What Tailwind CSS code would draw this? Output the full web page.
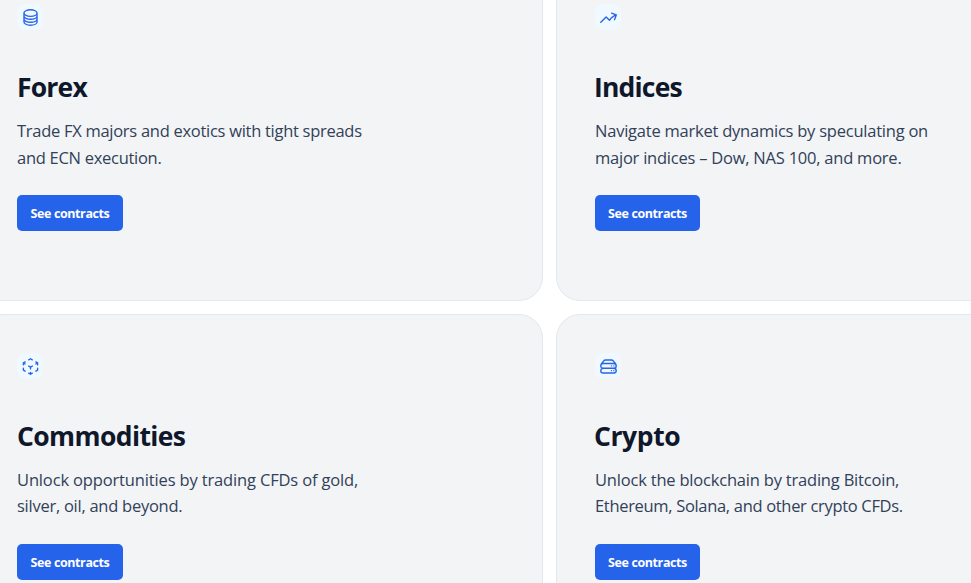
<!DOCTYPE html>
<html lang="en">
<head>
  <meta charset="UTF-8">
  <meta name="viewport" content="width=device-width, initial-scale=1.0">
  <title>Markets</title>
  <script src="https://cdn.jsdelivr.net/npm/@tailwindcss/browser@4"></script>
</head>
<body class="h-screen overflow-hidden bg-white font-['Segoe_UI','Open_Sans',sans-serif] text-slate-900">
  <!-- Markets grid -->
  <main class="-mt-[35px] -ml-[22px] grid w-[1143px] grid-cols-2 gap-[13px]">

    <section class="h-[336px] rounded-3xl border border-slate-200 bg-gray-100 p-[38px]">
      <div class="flex size-[26px] items-center justify-center rounded-lg bg-sky-50 text-[#2563eb]">
        <svg class="size-[19px]" viewBox="0 0 24 24" fill="none" stroke="currentColor" stroke-width="1.7" stroke-linecap="round" stroke-linejoin="round">
          <path d="M20.25 6.375c0 2.278-3.694 4.125-8.25 4.125S3.75 8.653 3.75 6.375m16.5 0c0-2.278-3.694-4.125-8.25-4.125S3.75 4.097 3.75 6.375m16.5 0v11.25c0 2.278-3.694 4.125-8.25 4.125s-8.25-1.847-8.25-4.125V6.375m16.5 0v3.75m-16.5-3.75v3.75m16.5 0v3.75C20.25 16.153 16.556 18 12 18s-8.25-1.847-8.25-4.125v-3.75m16.5 0c0 2.278-3.694 4.125-8.25 4.125s-8.25-1.847-8.25-4.125"/>
        </svg>
      </div>
      <h2 class="mt-[39px] text-[26.5px] leading-9 font-bold tracking-[-0.8px]">Forex</h2>
      <p class="mt-[13px] text-[16.5px] leading-[26.5px] tracking-[-0.28px] whitespace-nowrap text-slate-700">Trade FX majors and exotics with tight spreads<br>and ECN execution.</p>
      <a href="#" class="mt-6 flex h-9 w-[106px] items-center justify-center rounded-[5px] bg-[#2563eb] pt-0.5 text-[12.5px] font-bold tracking-[-0.4px] text-white hover:bg-blue-700">See contracts</a>
    </section>

    <section class="h-[336px] rounded-3xl border border-slate-200 bg-gray-100 p-[38px]">
      <div class="flex size-[26px] items-center justify-center rounded-lg bg-sky-50 text-[#2563eb]">
        <svg class="size-[19px]" viewBox="0 0 24 24" fill="none" stroke="currentColor" stroke-width="1.7" stroke-linecap="round" stroke-linejoin="round">
          <path d="M2.25 18 9 11.25l4.306 4.306a11.95 11.95 0 0 1 5.814-5.518l2.74-1.22m0 0-5.94-2.281m5.94 2.28-2.28 5.941"/>
        </svg>
      </div>
      <h2 class="mt-[39px] -ml-px text-[26.5px] leading-9 font-bold tracking-[-0.8px]">Indices</h2>
      <p class="mt-[13px] text-[16.5px] leading-[26.5px] tracking-[-0.23px] whitespace-nowrap text-slate-700">Navigate market dynamics by speculating on<br>major indices – Dow, NAS 100, and more.</p>
      <a href="#" class="mt-6 flex h-9 w-[105px] items-center justify-center rounded-[5px] bg-[#2563eb] pt-0.5 text-[12.5px] font-bold tracking-[-0.4px] text-white hover:bg-blue-700">See contracts</a>
    </section>

    <section class="h-[336px] rounded-3xl border border-slate-200 bg-gray-100 p-[38px]">
      <div class="flex size-[26px] items-center justify-center rounded-lg bg-sky-50 text-[#2563eb]">
        <svg class="size-[19px]" viewBox="0 0 24 24" fill="none" stroke="currentColor" stroke-width="1.7" stroke-linecap="round" stroke-linejoin="round">
          <path d="m21 7.5-2.25-1.313M21 7.5v2.25m0-2.25-2.25 1.313M3 7.5l2.25-1.313M3 7.5l2.25 1.313M3 7.5v2.25m9 3 2.25-1.313M12 12.75l-2.25-1.313M12 12.75V15m0 6.75 2.25-1.313M12 21.75V19.5m0 2.25-2.25-1.313m0-16.875L12 2.25l2.25 1.313M21 14.25v2.25l-2.25 1.313m-13.5 0L3 16.5v-2.25"/>
        </svg>
      </div>
      <h2 class="mt-[39px] text-[26.5px] leading-9 font-bold tracking-[-0.6px]">Commodities</h2>
      <p class="mt-[13px] text-[16.5px] leading-[26px] tracking-[-0.15px] whitespace-nowrap text-slate-700">Unlock opportunities by trading CFDs of gold,<br><span class="tracking-[-0.26px]">silver, oil, and beyond.</span></p>
      <a href="#" class="mt-[25px] flex h-9 w-[106px] items-center justify-center rounded-[5px] bg-[#2563eb] pt-0.5 text-[12.5px] font-bold tracking-[-0.4px] text-white hover:bg-blue-700">See contracts</a>
    </section>

    <section class="h-[336px] rounded-3xl border border-slate-200 bg-gray-100 p-[38px]">
      <div class="flex size-[26px] items-center justify-center rounded-lg bg-sky-50 text-[#2563eb]">
        <svg class="size-[19px]" viewBox="0 0 24 24" fill="none" stroke="currentColor" stroke-width="1.7" stroke-linecap="round" stroke-linejoin="round">
          <path d="M5.25 14.25h13.5m-13.5 0a3 3 0 0 1-3-3m3 3a3 3 0 1 0 0 6h13.5a3 3 0 1 0 0-6m-16.5-3a3 3 0 0 1 3-3h13.5a3 3 0 0 1 3 3m-19.5 0a4.5 4.5 0 0 1 .9-2.7L5.737 5.1a3.375 3.375 0 0 1 2.7-1.35h7.126c1.062 0 2.062.5 2.7 1.35l2.587 3.45a4.5 4.5 0 0 1 .9 2.7m0 0a3 3 0 0 1-3 3m0 3h.008v.008h-.008v-.008Zm0-6h.008v.008h-.008v-.008Zm-3 6h.008v.008h-.008v-.008Zm0-6h.008v.008h-.008v-.008Z"/>
        </svg>
      </div>
      <h2 class="mt-[39px] -ml-px text-[26.5px] leading-9 font-bold tracking-[-0.4px]">Crypto</h2>
      <p class="mt-[13px] text-[16.5px] leading-[26px] tracking-[-0.2px] whitespace-nowrap text-slate-700">Unlock the blockchain by trading Bitcoin,<br><span class="tracking-[-0.32px]">Ethereum, Solana, and other crypto CFDs.</span></p>
      <a href="#" class="mt-[25px] flex h-9 w-[105px] items-center justify-center rounded-[5px] bg-[#2563eb] pt-0.5 text-[12.5px] font-bold tracking-[-0.4px] text-white hover:bg-blue-700">See contracts</a>
    </section>

  </main>
</body>
</html>
